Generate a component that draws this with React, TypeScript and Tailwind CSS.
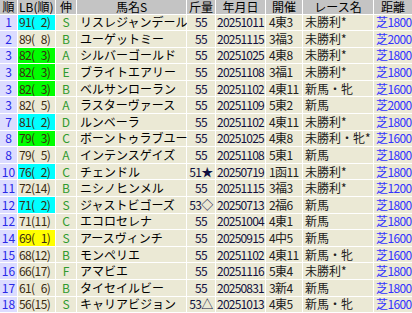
type Row = {
  rank: string;
  lb: string;
  hl?: "cyan" | "green" | "yellow";
  nobi: string;
  name: string;
  kin: string;
  date: string;
  kaisai: string;
  race: string;
  dist: string;
};

const rows: Row[] = [
  { rank: "1", lb: "91( 2)", hl: "cyan", nobi: "S", name: "リスレジャンデール", kin: "55", date: "20251011", kaisai: "4東3", race: "未勝利*", dist: "芝1800" },
  { rank: "2", lb: "89( 8)", nobi: "B", name: "ユーゲットミー", kin: "55", date: "20251115", kaisai: "3福3", race: "未勝利*", dist: "芝2000" },
  { rank: "3", lb: "82( 3)", hl: "green", nobi: "A", name: "シルバーゴールド", kin: "55", date: "20251025", kaisai: "4東8", race: "未勝利*", dist: "芝1800" },
  { rank: "3", lb: "82( 3)", hl: "green", nobi: "E", name: "ブライトエアリー", kin: "55", date: "20251108", kaisai: "3福1", race: "未勝利*", dist: "芝1800" },
  { rank: "3", lb: "82( 3)", hl: "green", nobi: "B", name: "ベルサンローラン", kin: "55", date: "20251102", kaisai: "4東11", race: "新馬・牝", dist: "芝1600" },
  { rank: "3", lb: "82( 5)", nobi: "A", name: "ラスターヴァース", kin: "55", date: "20251109", kaisai: "5東2", race: "新馬", dist: "芝2000" },
  { rank: "7", lb: "81( 2)", hl: "cyan", nobi: "D", name: "ルンベーラ", kin: "55", date: "20251102", kaisai: "4東11", race: "未勝利*", dist: "芝1800" },
  { rank: "8", lb: "79( 3)", hl: "green", nobi: "C", name: "ボーントゥラブユー", kin: "55", date: "20251025", kaisai: "4東8", race: "未勝利・牝*", dist: "芝1600" },
  { rank: "8", lb: "79( 5)", nobi: "A", name: "インテンスゲイズ", kin: "55", date: "20251108", kaisai: "5東1", race: "新馬", dist: "芝1800" },
  { rank: "10", lb: "76( 2)", hl: "cyan", nobi: "C", name: "チェンドル", kin: "51★", date: "20250719", kaisai: "1函11", race: "未勝利*", dist: "芝1800" },
  { rank: "11", lb: "72(14)", nobi: "B", name: "ニシノヒンメル", kin: "55", date: "20251115", kaisai: "3福3", race: "未勝利*", dist: "芝1200" },
  { rank: "12", lb: "71( 2)", hl: "cyan", nobi: "S", name: "ジャストビゴーズ", kin: "53◇", date: "20250713", kaisai: "2福6", race: "新馬", dist: "芝1800" },
  { rank: "12", lb: "71(11)", nobi: "C", name: "エコロセレナ", kin: "55", date: "20251004", kaisai: "4東1", race: "新馬", dist: "芝1800" },
  { rank: "14", lb: "69( 1)", hl: "yellow", nobi: "S", name: "アースヴィンチ", kin: "55", date: "20250915", kaisai: "4中5", race: "新馬", dist: "芝1600" },
  { rank: "15", lb: "68(12)", nobi: "B", name: "モンペリエ", kin: "55", date: "20251102", kaisai: "4東11", race: "新馬・牝", dist: "芝1600" },
  { rank: "16", lb: "66(17)", nobi: "F", name: "アマビエ", kin: "55", date: "20251116", kaisai: "5東4", race: "未勝利*", dist: "芝1800" },
  { rank: "17", lb: "61( 6)", nobi: "B", name: "タイセイルビー", kin: "55", date: "20250831", kaisai: "3新4", race: "新馬", dist: "芝1800" },
  { rank: "18", lb: "56(15)", nobi: "S", name: "キャリアビジョン", kin: "53△", date: "20251013", kaisai: "4東5", race: "新馬・牝", dist: "芝1600" },
];

const cols = "grid grid-cols-[17px_37px_20px_109px_28px_49px_36px_70px_38px] gap-x-px";
const head = "flex items-center justify-center bg-[#c4c4c4]";

function lbBg(hl?: Row["hl"]) {
  if (hl === "cyan") return "bg-[#00ffff]";
  if (hl === "green") return "bg-[#00ff00]";
  if (hl === "yellow") return "bg-[#ffff00]";
  return "bg-[#ebe9d5]";
}

export default function App() {
  return (
    <div
      className="flex h-[313px] w-[412px] flex-col gap-y-px overflow-hidden bg-white text-[12px] leading-none"
      style={{ fontFamily: '"Noto Sans CJK JP", "Noto Sans", sans-serif' }}
    >
      <div className={`${cols} h-[13.5px] shrink-0 text-black`}>
        <div className={head}>順</div>
        <div className={`${head} !justify-start pl-[1px]`}>LB(順)</div>
        <div className={head}>伸</div>
        <div className={head}>馬名S</div>
        <div className={head}>斤量</div>
        <div className={head}>年月日</div>
        <div className={head}>開催</div>
        <div className={head}>レース名</div>
        <div className={head}>距離</div>
      </div>
      {rows.map((r, i) => (
        <div key={i} className={`${cols} h-[15.6px] shrink-0`}>
          <div className="flex items-center justify-center bg-[#dcdcff] text-[#2828e8]">{r.rank}</div>
          <div className={`flex items-center pl-[1px] tracking-[-0.6px] text-[#3a2a10] ${lbBg(r.hl)}`}>
            {r.lb.replace(" ", "\u2007")}
          </div>
          <div className="flex items-center justify-center bg-[#ebe9d5] text-[#2f9a2f]">{r.nobi}</div>
          <div className="flex items-center whitespace-nowrap bg-[#ebe9d5] pl-[3px] text-black">{r.name}</div>
          <div className="flex items-center justify-center whitespace-nowrap bg-[#ebe9d5] tracking-[-0.6px] text-[#101040]">
            {r.kin}
          </div>
          <div className="flex items-center justify-center bg-[#ebe9d5] tracking-[-0.8px] text-[#101040]">{r.date}</div>
          <div className="flex items-center whitespace-nowrap bg-[#ebe9d5] pl-[3px] tracking-[-0.6px] text-[#202020]">
            {r.kaisai}
          </div>
          <div className="flex items-center whitespace-nowrap bg-[#ebe9d5] pl-[2px] text-[#202020]">{r.race}</div>
          <div className="flex items-center whitespace-nowrap bg-[#ebe9d5] pl-[2px] tracking-[-0.6px] text-[#3333ff]">
            {r.dist}
          </div>
        </div>
      ))}
    </div>
  );
}
